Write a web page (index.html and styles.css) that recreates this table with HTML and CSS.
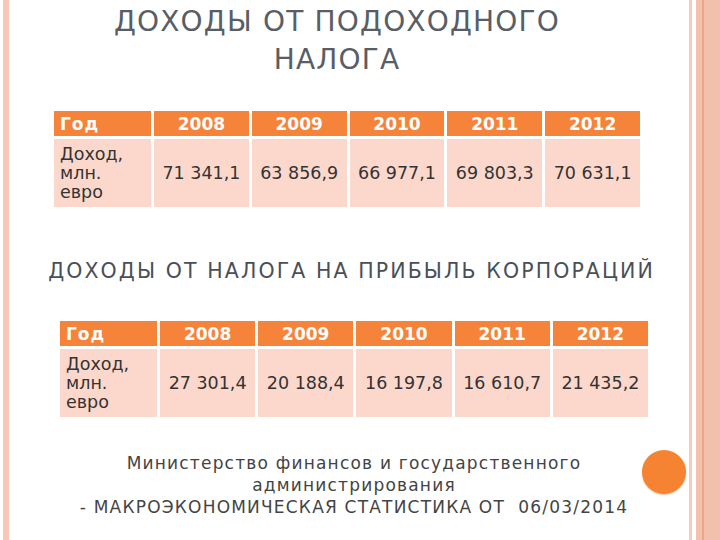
FILE: index.html
```html
<!DOCTYPE html>
<html lang="ru">
<head>
<meta charset="utf-8">
<link rel="stylesheet" href="styles.css">
</head>
<body>
<div class="slide">
  <div class="stripe-left"></div>
  <main class="content">
    <h1 class="title">ДОХОДЫ ОТ ПОДОХОДНОГО<br>НАЛОГА</h1>
    <table class="data t1">
      <tr class="head"><th class="c0">Год</th><th>2008</th><th>2009</th><th>2010</th><th>2011</th><th>2012</th></tr>
      <tr class="body"><td class="c0">Доход,<br>млн.<br>евро</td><td>71 341,1</td><td>63 856,9</td><td>66 977,1</td><td>69 803,3</td><td>70 631,1</td></tr>
    </table>
    <h2 class="subtitle">ДОХОДЫ ОТ НАЛОГА НА ПРИБЫЛЬ КОРПОРАЦИЙ</h2>
    <table class="data t2">
      <tr class="head"><th class="c0">Год</th><th>2008</th><th>2009</th><th>2010</th><th>2011</th><th>2012</th></tr>
      <tr class="body"><td class="c0">Доход,<br>млн.<br>евро</td><td>27 301,4</td><td>20 188,4</td><td>16 197,8</td><td>16 610,7</td><td>21 435,2</td></tr>
    </table>
    <div class="footer">
      <p class="source">Министерство финансов и государственного<br>администрирования<br>- МАКРОЭКОНОМИЧЕСКАЯ СТАТИСТИКА ОТ&nbsp; 06/03/2014</p>
      <div class="dot"></div>
    </div>
  </main>
  <div class="stripe-right">
    <div class="line-thin"></div>
    <div class="gap"></div>
    <div class="band"><div class="band-line"></div></div>
  </div>
</div>
</body>
</html>
```
FILE: styles.css
```css
html, body { margin: 0; padding: 0; background: #fff; }
.slide {
  width: 720px; height: 540px; display: flex; overflow: hidden;
  font-family: "DejaVu Sans", sans-serif; color: #3f3f3f;
}
.stripe-left { width: 6px; margin-left: 3px; background: #f7c6b6; flex: none; }
.content { flex: 1; display: flex; flex-direction: column; min-width: 0; }
.stripe-right { flex: none; display: flex; width: 31px; }
.line-thin { width: 3px; background: #f5cbbf; }
.gap { width: 4px; }
.band { flex: 1; background: #f1c1ad; display: flex; padding-left: 6px; }
.band-line { width: 2px; background: #eda584; }

.title {
  margin: 3px 0 0 0; padding-right: 24px; text-align: center;
  font-family: "DejaVu Sans", sans-serif; letter-spacing: 1.2px;
  font-weight: normal; font-size: 28px; line-height: 38px; color: #595e66;
}
.data { border-collapse: separate; border-spacing: 3px; table-layout: fixed; }
.t1 { margin: 29px 0 0 42px; width: 592px; }
.t2 { margin: 35px 0 0 48px; width: 594px; }
.data th, .data td { padding: 0 4px; }
.data .c0 { width: 87px; text-align: left; }
.head th {
  background: #f5843a; color: #fff; font-weight: bold; font-size: 17px;
  height: 25px; text-align: center; line-height: 20px;
}
.head th.c0 { letter-spacing: 1px; padding-left: 6px; }
.body td {
  background: #fcd8cc; font-size: 17.5px; line-height: 19px; height: 68px;
  text-align: center; color: #333;
}
.body td.c0 { padding-left: 6px; vertical-align: middle; }
.subtitle {
  margin: 49px 0 0 0; text-align: center; padding-left: 5px;
  font-family: "DejaVu Sans", sans-serif; letter-spacing: 2.1px;
  font-weight: normal; font-size: 20.5px; color: #4a4f57; line-height: 24px;
}
.footer { display: flex; align-items: flex-start; margin-top: 32px; }
.source {
  flex: 1; margin: 0; padding-left: 57px; text-align: center;
  font-size: 17px; line-height: 22px; letter-spacing: 1.2px;
  font-family: "DejaVu Sans", sans-serif; color: #444;
}
.dot {
  width: 44px; height: 44px; border-radius: 50%; background: #f58332;
  margin: -2px 3px 0 0; flex: none; box-shadow: 0 1px 1px #f3c0a8;
}
```
